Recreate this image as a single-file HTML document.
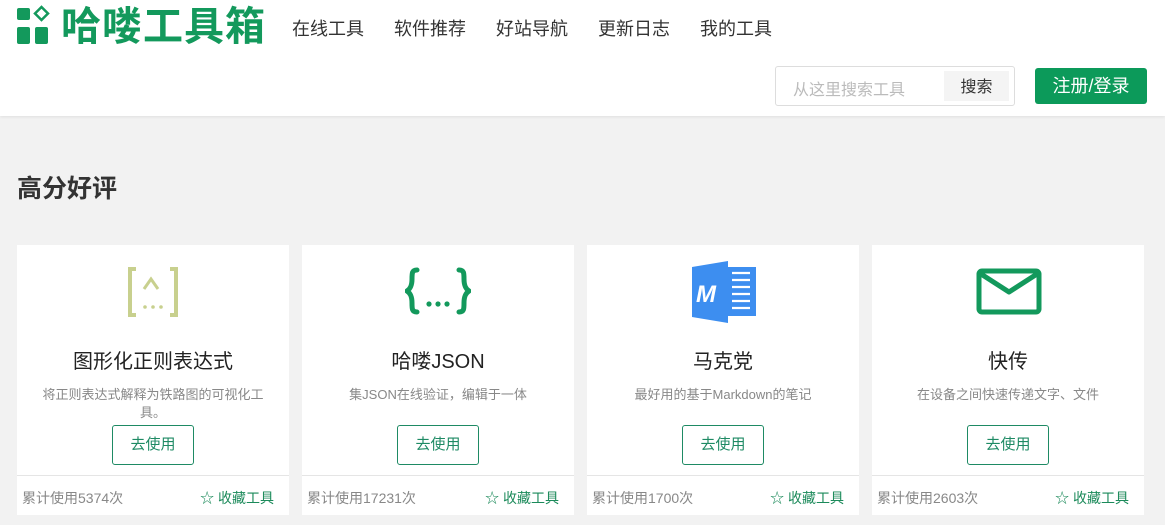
<!DOCTYPE html>
<html><head><meta charset="utf-8"><style>
*{margin:0;padding:0;box-sizing:border-box}
body{width:1165px;height:525px;overflow:hidden;background:#f2f2f2;font-family:"Liberation Sans","Noto Sans CJK SC",sans-serif;position:relative}
.hdr{position:absolute;left:0;top:0;width:1165px;height:116px;background:#fff;box-shadow:0 1px 3px rgba(0,0,0,.08)}
.abs{position:absolute}
.logo{left:61px;top:6px;font-size:40px;font-weight:bold;color:#13995c;line-height:42px;letter-spacing:1px}
.nav{top:17px;font-size:18px;color:#333;line-height:24px}
.search{left:775px;top:66px;width:240px;height:40px;border:1px solid #ddd;border-radius:3px}
.search span{position:absolute;left:17px;top:9px;font-size:16px;color:#bbb}
.search b{position:absolute;left:168px;top:4px;width:65px;height:30px;background:#f4f4f4;font-weight:normal;font-size:16px;color:#333;text-align:center;line-height:34px}
.reg{left:1035px;top:68px;width:112px;height:36px;background:#0c9a5a;border-radius:3px;color:#fff;font-size:18px;text-align:center;line-height:36px}
h2{position:absolute;left:17px;top:169px;font-size:25px;color:#333;font-weight:bold}
.card{position:absolute;top:245px;width:272px;height:270px;background:#fff;text-align:center}
.card .t{position:absolute;top:100px;width:100%;font-size:20px;color:#222}
.card .d{position:absolute;top:141px;left:14px;right:14px;font-size:13px;color:#888;line-height:18px}
.card .btn{position:absolute;left:95px;top:180px;width:82px;height:40px;border:1px solid #1e8a64;border-radius:3px;color:#1e8a64;font-size:15px;line-height:38px}
.card .f{position:absolute;top:230px;left:0;right:0;border-top:1px solid #e5e5e5;height:40px}
.card .f .l{position:absolute;left:5px;top:12px;font-size:14px;color:#888}
.card .f .r{position:absolute;right:15px;top:12px;font-size:14px;color:#1b8a5a}
.card svg.ic{position:absolute}
</style></head><body>
<div class="hdr">
<svg class="abs" style="left:0;top:0" width="60" height="50" viewBox="0 0 60 50">
<rect x="17" y="8" width="13" height="12" rx="2" fill="#13995c"/>
<rect x="17" y="27" width="13" height="17" rx="2" fill="#13995c"/>
<rect x="35" y="27" width="13" height="17" rx="2" fill="#13995c"/>
<path d="M41.5 7 L48 13.5 L41.5 20 L35 13.5 Z" fill="none" stroke="#13995c" stroke-width="2.5"/>
</svg>
<div class="abs logo">哈喽工具箱</div>
<div class="abs nav" style="left:292px">在线工具</div>
<div class="abs nav" style="left:394px">软件推荐</div>
<div class="abs nav" style="left:496px">好站导航</div>
<div class="abs nav" style="left:598px">更新日志</div>
<div class="abs nav" style="left:700px">我的工具</div>
<div class="abs search"><span>从这里搜索工具</span><b>搜索</b></div>
<div class="abs reg">注册/登录</div>
</div>
<h2>高分好评</h2>

<div class="card" style="left:17px">
<svg class="ic" style="left:110px;top:22px" width="52" height="50" viewBox="0 0 52 50"><g fill="none" stroke="#c8d08e" stroke-width="4"><path d="M9 2H3V48H9"/><path d="M43 2H49V48H43"/><path d="M17 22L24 12L31 22" stroke-width="3"/></g><g fill="#c8d08e"><circle cx="18" cy="40" r="1.8"/><circle cx="26" cy="40" r="1.8"/><circle cx="34" cy="40" r="1.8"/></g></svg>
<div class="t">图形化正则表达式</div><div class="d">将正则表达式解释为铁路图的可视化工具。</div>
<div class="btn">去使用</div><div class="f"><span class="l">累计使用5374次</span><span class="r">☆ 收藏工具</span></div></div>

<div class="card" style="left:302px">
<svg class="ic" style="left:103px;top:22px" width="66" height="48" viewBox="0 0 66 48"><g fill="none" stroke="#13995c" stroke-width="5" stroke-linecap="round"><path d="M12 3C7 3 7 6 7 12C7 19 5 22 2 24C5 26 7 29 7 36C7 42 7 45 12 45"/><path d="M54 3C59 3 59 6 59 12C59 19 61 22 64 24C61 26 59 29 59 36C59 42 59 45 54 45"/></g><g fill="#13995c"><circle cx="24" cy="37" r="2.6"/><circle cx="33" cy="37" r="2.6"/><circle cx="42" cy="37" r="2.6"/></g></svg>
<div class="t">哈喽JSON</div><div class="d">集JSON在线验证，编辑于一体</div>
<div class="btn">去使用</div><div class="f"><span class="l">累计使用17231次</span><span class="r">☆ 收藏工具</span></div></div>

<div class="card" style="left:587px">
<svg class="ic" style="left:105px;top:15px" width="64" height="64" viewBox="0 0 64 64"><rect x="30" y="7" width="34" height="49" fill="#3d8ef0"/><path d="M0 7L36 1V63L0 57Z" fill="#3d8ef0"/><g stroke="#fff" stroke-width="2.2"><path d="M40 13H58M40 20H58M40 27H58M40 34H58M40 41H58M40 48H58"/></g><text x="4" y="42" font-family="Liberation Sans" font-weight="bold" font-style="italic" font-size="24" fill="#fff">M</text></svg>
<div class="t">马克党</div><div class="d">最好用的基于Markdown的笔记</div>
<div class="btn">去使用</div><div class="f"><span class="l">累计使用1700次</span><span class="r">☆ 收藏工具</span></div></div>

<div class="card" style="left:872px">
<svg class="ic" style="left:104px;top:23px" width="66" height="48" viewBox="0 0 66 48"><rect x="3" y="3" width="60" height="41" rx="3" fill="none" stroke="#13995c" stroke-width="5"/><path d="M5 6L33 24L61 6" fill="none" stroke="#13995c" stroke-width="5" stroke-linejoin="round"/></svg>
<div class="t">快传</div><div class="d">在设备之间快速传递文字、文件</div>
<div class="btn">去使用</div><div class="f"><span class="l">累计使用2603次</span><span class="r">☆ 收藏工具</span></div></div>
</body></html>
